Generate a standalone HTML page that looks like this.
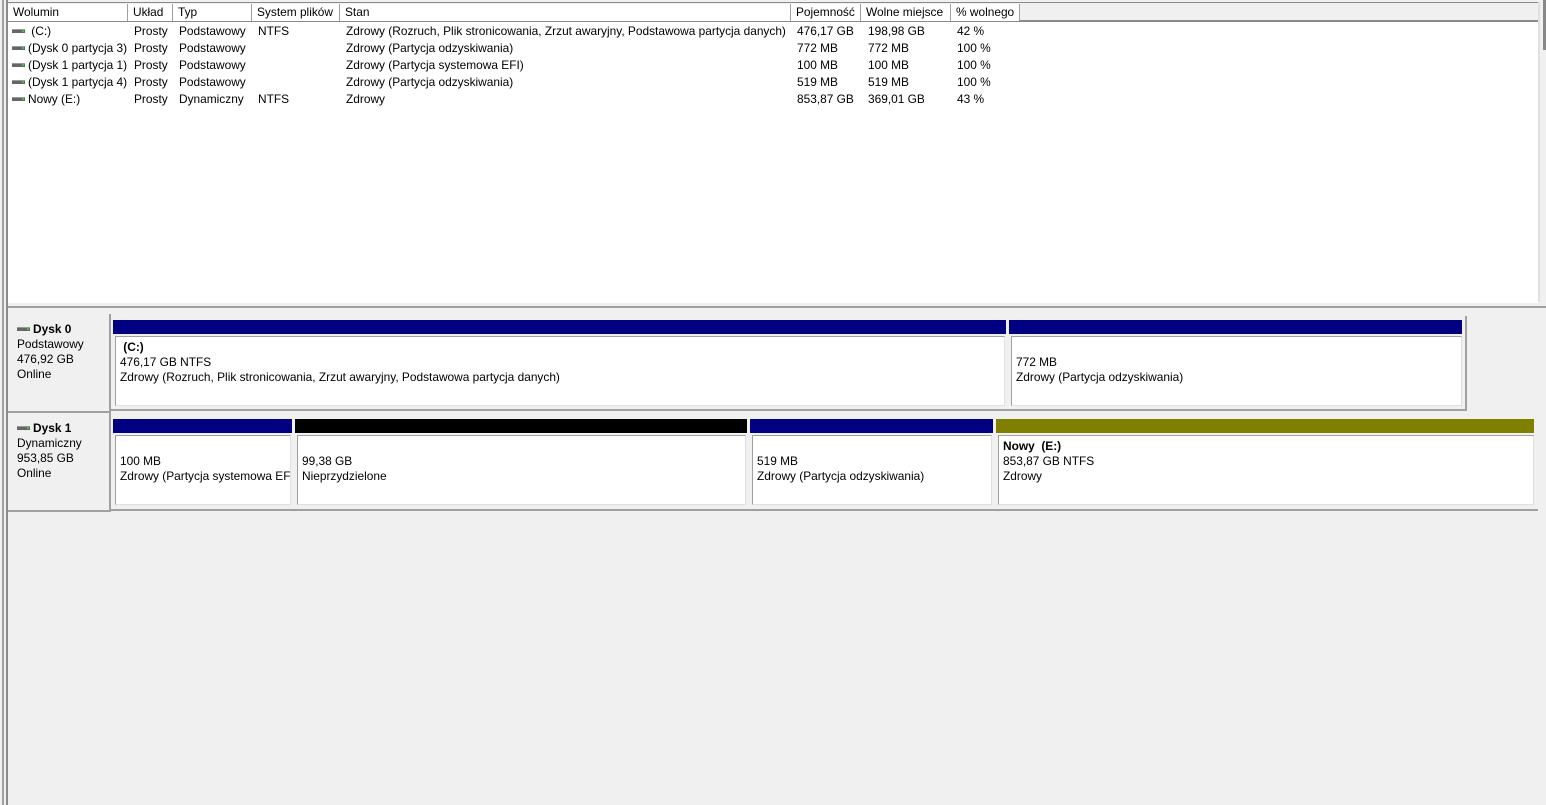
<!DOCTYPE html>
<html><head><meta charset="utf-8"><style>
*{margin:0;padding:0;box-sizing:border-box}
body{width:1546px;height:805px;background:#f0f0f0;font-family:"Liberation Sans",sans-serif;font-size:11.9px;color:#000;position:relative;overflow:hidden}
.a{position:absolute;white-space:nowrap}
.hd{position:absolute;top:4px;height:17px;background:#fff;border-right:1px solid #a0a0a0;padding-left:5px;line-height:17px}
.ic{display:inline-block;width:13px;height:4px;background:#666;border-top:1px solid #999;position:relative;vertical-align:middle;margin-right:3px;top:-1px}
.ic:after{content:"";position:absolute;right:1px;top:0;width:2px;height:2px;background:#3c3}
.bar{position:absolute;height:14px}
.box{position:absolute;background:#fff;border:1px solid #a0a0a0;border-right-color:#e0e0e0;border-bottom-color:#e0e0e0;padding:3px 0 0 4px;line-height:15px;white-space:nowrap;overflow:hidden}
.lab{position:absolute;left:8px;width:103px;border-right:2px solid #a0a0a0;border-bottom:2px solid #a0a0a0;background:#f0f0f0;padding:8px 0 0 9px;line-height:15px}
</style></head><body>
<div class="a" style="left:2px;top:0;width:2px;height:805px;background:#a0a0a0"></div>
<div class="a" style="left:6px;top:0;width:2px;height:805px;background:#8a8a8a"></div>
<div class="a" style="left:8px;top:2px;width:1531px;height:301px;background:#fff;border-top:2px solid #8a8a8a"></div>
<div class="a" style="left:8px;top:3px;width:1531px;height:19px;background:#f0f0f0;border-bottom:2px solid #8a8a8a"></div>
<div class="a" style="left:1538px;top:2px;width:2px;height:300px;background:#e0e0e0"></div>
<div class="a" style="left:1543px;top:0;width:3px;height:50px;background:#888"></div>
<div class="hd" style="left:8px;width:120px">Wolumin</div>
<div class="hd" style="left:128px;width:45px">Układ</div>
<div class="hd" style="left:173px;width:79px">Typ</div>
<div class="hd" style="left:252px;width:88px">System plików</div>
<div class="hd" style="left:340px;width:451px">Stan</div>
<div class="hd" style="left:791px;width:70px">Pojemność</div>
<div class="hd" style="left:861px;width:90px">Wolne miejsce</div>
<div class="hd" style="left:951px;width:69px">% wolnego</div>

<div class="a" style="left:12px;top:23px;line-height:17px">
<div><span class="ic"></span>&nbsp;(C:)</div>
<div><span class="ic"></span>(Dysk 0 partycja 3)</div>
<div><span class="ic"></span>(Dysk 1 partycja 1)</div>
<div><span class="ic"></span>(Dysk 1 partycja 4)</div>
<div><span class="ic"></span>Nowy (E:)</div></div>
<div class="a" style="left:134px;top:23px;line-height:17px">Prosty<br>Prosty<br>Prosty<br>Prosty<br>Prosty</div>
<div class="a" style="left:179px;top:23px;line-height:17px">Podstawowy<br>Podstawowy<br>Podstawowy<br>Podstawowy<br>Dynamiczny</div>
<div class="a" style="left:258px;top:23px;line-height:17px">NTFS<br><br><br><br>NTFS</div>
<div class="a" style="left:346px;top:23px;line-height:17px">Zdrowy (Rozruch, Plik stronicowania, Zrzut awaryjny, Podstawowa partycja danych)<br>Zdrowy (Partycja odzyskiwania)<br>Zdrowy (Partycja systemowa EFI)<br>Zdrowy (Partycja odzyskiwania)<br>Zdrowy</div>
<div class="a" style="left:797px;top:23px;line-height:17px">476,17 GB<br>772 MB<br>100 MB<br>519 MB<br>853,87 GB</div>
<div class="a" style="left:868px;top:23px;line-height:17px">198,98 GB<br>772 MB<br>100 MB<br>519 MB<br>369,01 GB</div>
<div class="a" style="left:957px;top:23px;line-height:17px">42 %<br>100 %<br>100 %<br>100 %<br>43 %</div>

<div class="a" style="left:8px;top:303px;width:1538px;height:5px;background:#f0f0f0;border-bottom:2px solid #a0a0a0"></div>

<div class="lab" style="top:314px;height:99px"><b><span class="ic"></span>Dysk 0</b><br>Podstawowy<br>476,92 GB<br>Online</div>
<div class="a" style="left:111px;top:316px;width:1356px;height:95px;background:#f0f0f0;border-right:2px solid #a0a0a0;border-bottom:2px solid #a0a0a0"></div>
<div class="bar" style="left:113px;top:320px;width:893px;background:#000080"></div>
<div class="bar" style="left:1009px;top:320px;width:453px;background:#000080"></div>
<div class="box" style="left:115px;top:336px;width:890px;height:70px"><b>&nbsp;(C:)</b><br>476,17 GB NTFS<br>Zdrowy (Rozruch, Plik stronicowania, Zrzut awaryjny, Podstawowa partycja danych)</div>
<div class="box" style="left:1011px;top:336px;width:451px;height:70px"><br>772 MB<br>Zdrowy (Partycja odzyskiwania)</div>

<div class="lab" style="top:413px;height:99px"><b><span class="ic"></span>Dysk 1</b><br>Dynamiczny<br>953,85 GB<br>Online</div>
<div class="a" style="left:111px;top:415px;width:1427px;height:96px;background:#f0f0f0;border-bottom:2px solid #a0a0a0"></div>
<div class="bar" style="left:113px;top:419px;width:179px;background:#000080"></div>
<div class="bar" style="left:295px;top:419px;width:452px;background:#000"></div>
<div class="bar" style="left:750px;top:419px;width:243px;background:#000080"></div>
<div class="bar" style="left:996px;top:419px;width:538px;background:#808000"></div>
<div class="box" style="left:115px;top:435px;width:176px;height:70px"><br>100 MB<br>Zdrowy (Partycja systemowa EF</div>
<div class="box" style="left:297px;top:435px;width:449px;height:70px"><br>99,38 GB<br>Nieprzydzielone</div>
<div class="box" style="left:752px;top:435px;width:240px;height:70px"><br>519 MB<br>Zdrowy (Partycja odzyskiwania)</div>
<div class="box" style="left:998px;top:435px;width:536px;height:70px"><b>Nowy&nbsp; (E:)</b><br>853,87 GB NTFS<br>Zdrowy</div>
</body></html>
